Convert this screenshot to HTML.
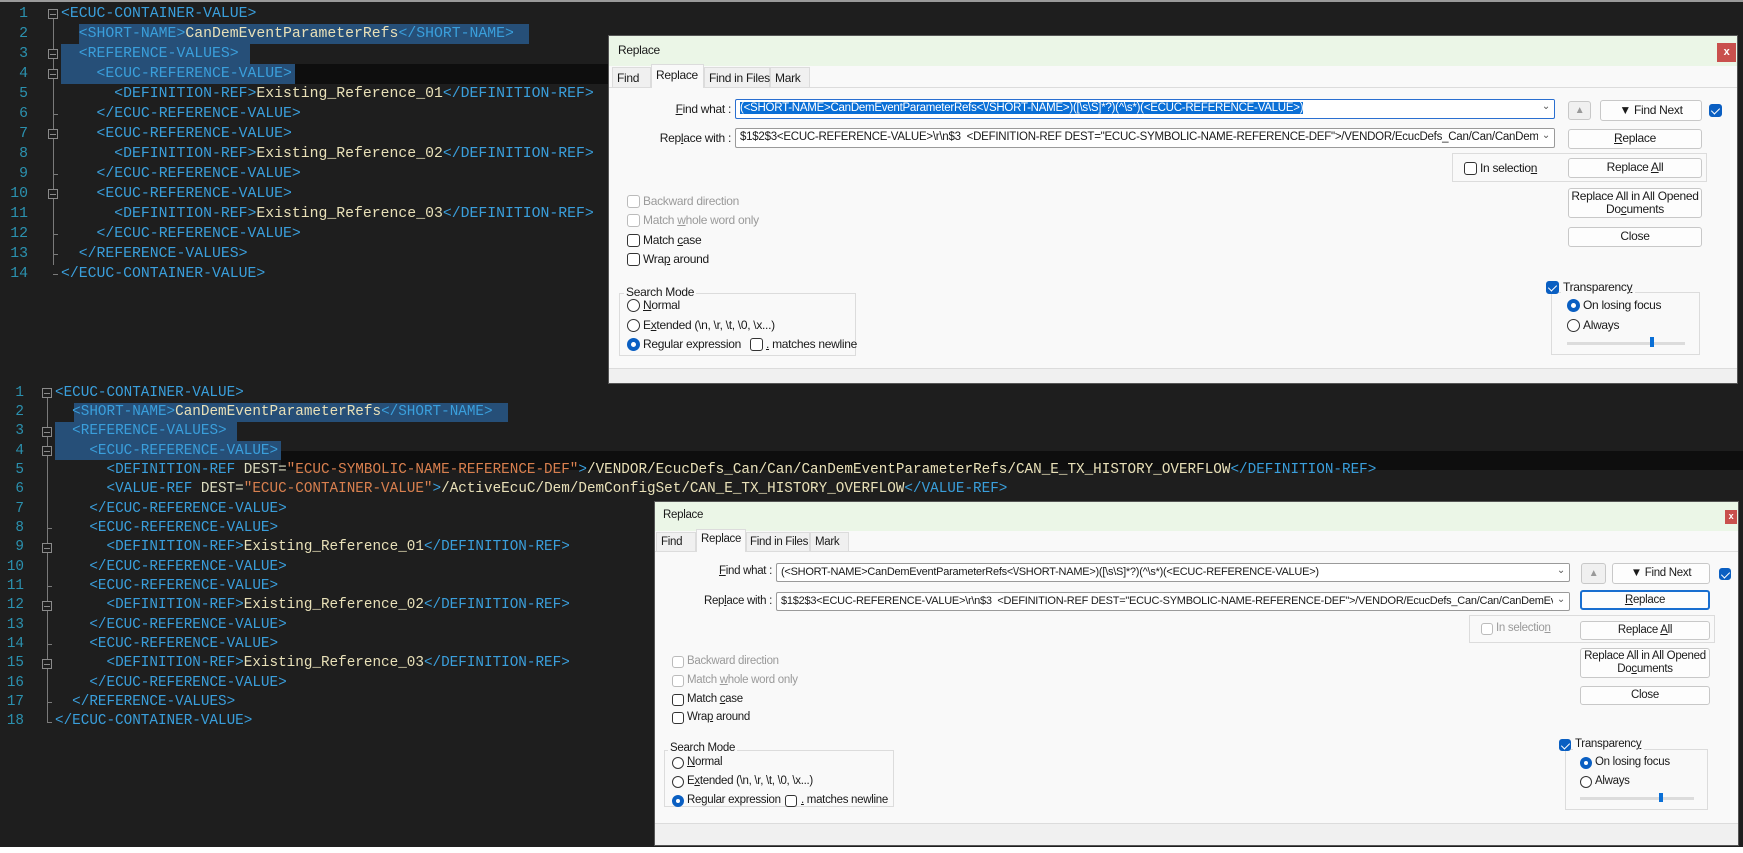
<!DOCTYPE html>
<html><head><meta charset="utf-8">
<style>
*{margin:0;padding:0;box-sizing:border-box}
body{width:1743px;height:853px;background:#fff;position:relative;overflow:hidden;font-family:"Liberation Sans",sans-serif}
.ed{position:absolute;left:0;background:#1e1e1e;width:1743px}
.code{position:absolute;font-family:"Liberation Mono",monospace;white-space:pre;color:#dcdcaa}
.ln{position:absolute;font-family:"Liberation Mono",monospace;color:#2b91af;text-align:right}
.t{color:#3a9fdc}.x{color:#e8e0b8}.a{color:#dcdcc0}.v{color:#d9804f}
.hl{position:absolute;background:#264f78}
.cur{position:absolute;background:#0e0e0e}
.fb{position:absolute;width:10px;height:10px;border:1px solid #8a8a8a;background:#1e1e1e}
.fb:after{content:"";position:absolute;left:1px;right:1px;top:3.5px;height:1px;background:#8a8a8a}
.vl{position:absolute;width:1px;background:#7a7a7a}
.tk{position:absolute;height:1px;width:5px;background:#7a7a7a}
.dl{position:absolute;background:#f9f9f9;font-size:12px;color:#1a1a1a;box-shadow:0 0 0 1px #555;letter-spacing:-.3px}
.dl > *{position:absolute;white-space:nowrap}
.tb{left:0;right:0;top:0;background:#ebf6e7}
.tab{border:1px solid #dcdcdc;border-bottom:none;background:#f0f0f0;padding:3px 0 0 4px}
.tab.act{background:#f9f9f9}
.lbl{text-align:right}
.fld{background:#fff;border:1px solid #9a9a9a;border-radius:2px;overflow:hidden;padding:2px 0 0 4px;font-size:11.5px;letter-spacing:-.25px}
.fld .dd{position:absolute;right:0;top:0;padding:1px 4px 0 4px;color:#555;font-size:10px;background:#fff}
.btn{background:#fdfdfd;border:1px solid #c8c8c8;border-radius:3px;text-align:center;line-height:17px}
.cb{width:13px;height:13px;border:1px solid #333;border-radius:3px;background:#fff}
.cb.dis{border-color:#bbb}
.cb.on{background:#0a5fc2;border-color:#0a5fc2}
.cb.on:after{content:"";position:absolute;left:3px;top:1px;width:4px;height:7px;border:solid #fff;border-width:0 1.5px 1.5px 0;transform:rotate(45deg)}
.rd{width:13px;height:13px;border:1px solid #333;border-radius:50%;background:#fff}
.rd.on{border:4px solid #0a5fc2}
.gray{color:#9a9a9a}
.grp{border:1px solid #dcdcdc}
.st{left:0;right:0;bottom:0;background:#f0f0f0;border-top:1px solid #dcdcdc}
</style></head><body>

<div class="ed" style="top:0;height:847px"></div>
<div style="position:absolute;left:0;top:0;width:1743px;height:2px;background:#9a9a9a"></div>

<!-- TOP EDITOR -->
<div class="cur" style="left:295px;top:64px;width:320px;height:20px"></div>
<div class="hl" style="left:79px;top:24px;width:450px;height:20px"></div>
<div class="hl" style="left:61px;top:44px;width:189px;height:20px"></div>
<div class="hl" style="left:61px;top:64px;width:234px;height:20px"></div>
<div class="ln" style="left:0;top:4px;width:28px;font-size:14.8px;line-height:20px">1<br>2<br>3<br>4<br>5<br>6<br>7<br>8<br>9<br>10<br>11<br>12<br>13<br>14</div>
<div class="vl" style="left:53px;top:19px;height:246px"></div>
<div class="fb" style="left:48px;top:9px"></div>
<div class="fb" style="left:48px;top:49px"></div>
<div class="fb" style="left:48px;top:69px"></div>
<div class="fb" style="left:48px;top:129px"></div>
<div class="fb" style="left:48px;top:189px"></div>
<div class="tk" style="left:53px;top:114px"></div><div class="tk" style="left:53px;top:174px"></div><div class="tk" style="left:53px;top:234px"></div><div class="tk" style="left:53px;top:254px"></div><div class="tk" style="left:53px;top:274px"></div>
<div class="code" style="left:61px;top:4px;font-size:14.8px;line-height:20px"><span class="t">&lt;ECUC-CONTAINER-VALUE&gt;</span>
  <span class="t">&lt;SHORT-NAME&gt;</span><span class="x">CanDemEventParameterRefs</span><span class="t">&lt;/SHORT-NAME&gt;</span>
  <span class="t">&lt;REFERENCE-VALUES&gt;</span>
    <span class="t">&lt;ECUC-REFERENCE-VALUE&gt;</span>
      <span class="t">&lt;DEFINITION-REF&gt;</span><span class="x">Existing_Reference_01</span><span class="t">&lt;/DEFINITION-REF&gt;</span>
    <span class="t">&lt;/ECUC-REFERENCE-VALUE&gt;</span>
    <span class="t">&lt;ECUC-REFERENCE-VALUE&gt;</span>
      <span class="t">&lt;DEFINITION-REF&gt;</span><span class="x">Existing_Reference_02</span><span class="t">&lt;/DEFINITION-REF&gt;</span>
    <span class="t">&lt;/ECUC-REFERENCE-VALUE&gt;</span>
    <span class="t">&lt;ECUC-REFERENCE-VALUE&gt;</span>
      <span class="t">&lt;DEFINITION-REF&gt;</span><span class="x">Existing_Reference_03</span><span class="t">&lt;/DEFINITION-REF&gt;</span>
    <span class="t">&lt;/ECUC-REFERENCE-VALUE&gt;</span>
  <span class="t">&lt;/REFERENCE-VALUES&gt;</span>
<span class="t">&lt;/ECUC-CONTAINER-VALUE&gt;</span></div>

<!-- BOTTOM EDITOR -->
<div class="cur" style="left:281px;top:451px;width:1462px;height:19.4px"></div>
<div class="hl" style="left:74px;top:403px;width:434px;height:19.4px"></div>
<div class="hl" style="left:55px;top:422px;width:182px;height:19.4px"></div>
<div class="hl" style="left:55px;top:441px;width:226px;height:19.4px"></div>
<div class="ln" style="left:0;top:383.5px;width:24px;font-size:14.3px;line-height:19.35px">1<br>2<br>3<br>4<br>5<br>6<br>7<br>8<br>9<br>10<br>11<br>12<br>13<br>14<br>15<br>16<br>17<br>18</div>
<div class="vl" style="left:47px;top:398px;height:324px"></div>
<div class="fb" style="left:42px;top:388px"></div>
<div class="fb" style="left:42px;top:427px"></div>
<div class="fb" style="left:42px;top:446px"></div>
<div class="fb" style="left:42px;top:543px"></div>
<div class="fb" style="left:42px;top:601px"></div>
<div class="fb" style="left:42px;top:659px"></div>
<div class="tk" style="left:47px;top:528px"></div><div class="tk" style="left:47px;top:586px"></div><div class="tk" style="left:47px;top:644px"></div><div class="tk" style="left:47px;top:702px"></div><div class="tk" style="left:47px;top:722px"></div>
<div class="code" style="left:55px;top:383.5px;font-size:14.3px;line-height:19.35px"><span class="t">&lt;ECUC-CONTAINER-VALUE&gt;</span>
  <span class="t">&lt;SHORT-NAME&gt;</span><span class="x">CanDemEventParameterRefs</span><span class="t">&lt;/SHORT-NAME&gt;</span>
  <span class="t">&lt;REFERENCE-VALUES&gt;</span>
    <span class="t">&lt;ECUC-REFERENCE-VALUE&gt;</span>
      <span class="t">&lt;DEFINITION-REF </span><span class="a">DEST=</span><span class="v">"ECUC-SYMBOLIC-NAME-REFERENCE-DEF"</span><span class="t">&gt;</span><span class="x">/VENDOR/EcucDefs_Can/Can/CanDemEventParameterRefs/CAN_E_TX_HISTORY_OVERFLOW</span><span class="t">&lt;/DEFINITION-REF&gt;</span>
      <span class="t">&lt;VALUE-REF </span><span class="a">DEST=</span><span class="v">"ECUC-CONTAINER-VALUE"</span><span class="t">&gt;</span><span class="x">/ActiveEcuC/Dem/DemConfigSet/CAN_E_TX_HISTORY_OVERFLOW</span><span class="t">&lt;/VALUE-REF&gt;</span>
    <span class="t">&lt;/ECUC-REFERENCE-VALUE&gt;</span>
    <span class="t">&lt;ECUC-REFERENCE-VALUE&gt;</span>
      <span class="t">&lt;DEFINITION-REF&gt;</span><span class="x">Existing_Reference_01</span><span class="t">&lt;/DEFINITION-REF&gt;</span>
    <span class="t">&lt;/ECUC-REFERENCE-VALUE&gt;</span>
    <span class="t">&lt;ECUC-REFERENCE-VALUE&gt;</span>
      <span class="t">&lt;DEFINITION-REF&gt;</span><span class="x">Existing_Reference_02</span><span class="t">&lt;/DEFINITION-REF&gt;</span>
    <span class="t">&lt;/ECUC-REFERENCE-VALUE&gt;</span>
    <span class="t">&lt;ECUC-REFERENCE-VALUE&gt;</span>
      <span class="t">&lt;DEFINITION-REF&gt;</span><span class="x">Existing_Reference_03</span><span class="t">&lt;/DEFINITION-REF&gt;</span>
    <span class="t">&lt;/ECUC-REFERENCE-VALUE&gt;</span>
  <span class="t">&lt;/REFERENCE-VALUES&gt;</span>
<span class="t">&lt;/ECUC-CONTAINER-VALUE&gt;</span></div>

<!-- TOP DIALOG -->
<div class="dl" style="left:609px;top:36px;width:1128px;height:347px">
 <div class="tb" style="height:30px"></div>
 <div style="left:9px;top:7px">Replace</div>
 <div style="left:1108px;top:7px;width:19px;height:19px;background:#c9504d;color:#fff;font-size:11px;text-align:center;line-height:18px;font-weight:bold">x</div>
 <div style="left:0;right:0;top:51px;height:1px;background:#dcdcdc"></div>
 <div class="tab" style="left:3px;top:31px;width:39px;height:20px">Find</div>
 <div class="tab act" style="left:42px;top:28px;width:53px;height:24px;padding-top:3px">Replace</div>
 <div class="tab" style="left:95px;top:31px;width:66px;height:20px">Find in Files</div>
 <div class="tab" style="left:161px;top:31px;width:40px;height:20px">Mark</div>
 <div class="lbl" style="right:1006px;top:66px"><u>F</u>ind what :</div>
 <div class="fld" style="left:126px;top:63px;width:820px;height:20px;border-color:#2a6fd0"><span style="background:#0a6fd6;color:#fff">(&lt;SHORT-NAME&gt;CanDemEventParameterRefs&lt;\/SHORT-NAME&gt;)([\s\S]*?)(^\s*)(&lt;ECUC-REFERENCE-VALUE&gt;)</span><span class="dd">&#8964;</span></div>
 <div class="lbl" style="right:1006px;top:95px">Rep<u>l</u>ace with :</div>
 <div class="fld" style="left:126px;top:92px;width:820px;height:20px">$1$2$3&lt;ECUC-REFERENCE-VALUE&gt;\r\n$3&nbsp; &lt;DEFINITION-REF DEST="ECUC-SYMBOLIC-NAME-REFERENCE-DEF"&gt;/VENDOR/EcucDefs_Can/Can/CanDemEventParam<span class="dd">&#8964;</span></div>
 <div class="btn" style="left:959px;top:65px;width:23px;height:19px;background:#f0f0f0;color:#999;font-size:10px">&#9650;</div>
 <div class="btn" style="left:991px;top:64px;width:102px;height:21px;line-height:19px">&#9660; Find Next</div>
 <div class="cb on" style="left:1100px;top:68px"></div>
 <div class="btn" style="left:959px;top:93px;width:134px;height:20px"><u>R</u>eplace</div>
 <div class="grp" style="left:843px;top:117px;width:255px;height:29px"></div>
 <div class="cb" style="left:855px;top:126px"></div>
 <div style="left:871px;top:125px">In selectio<u>n</u></div>
 <div class="btn" style="left:959px;top:122px;width:134px;height:20px">Replace <u>A</u>ll</div>
 <div class="btn" style="left:959px;top:152px;width:134px;height:30px;line-height:13px;padding-top:1px">Replace All in All Opened<br>Do<u>c</u>uments</div>
 <div class="btn" style="left:959px;top:191px;width:134px;height:20px">Close</div>
 <div class="cb dis" style="left:18px;top:159px"></div><div class="gray" style="left:34px;top:158px">Backward direction</div>
 <div class="cb dis" style="left:18px;top:178px"></div><div class="gray" style="left:34px;top:177px">Match <u>w</u>hole word only</div>
 <div class="cb" style="left:18px;top:198px"></div><div style="left:34px;top:197px">Match <u>c</u>ase</div>
 <div class="cb" style="left:18px;top:217px"></div><div style="left:34px;top:216px">Wra<u>p</u> around</div>
 <div class="grp" style="left:10px;top:257px;width:237px;height:63px"></div>
 <div style="left:15px;top:249px;background:#f9f9f9;padding:0 2px">Search Mode</div>
 <div class="rd" style="left:18px;top:263px"></div><div style="left:34px;top:262px"><u>N</u>ormal</div>
 <div class="rd" style="left:18px;top:283px"></div><div style="left:34px;top:282px">E<u>x</u>tended (\n, \r, \t, \0, \x...)</div>
 <div class="rd on" style="left:18px;top:302px"></div><div style="left:34px;top:301px">Re<u>g</u>ular expression</div>
 <div class="cb" style="left:141px;top:302px"></div><div style="left:157px;top:301px"><u>.</u> matches newline</div>
 <div class="grp" style="left:942px;top:256px;width:149px;height:63px"></div>
 <div class="cb on" style="left:937px;top:245px"></div>
 <div style="left:952px;top:244px;background:#f9f9f9;padding:0 3px 0 2px">Transparenc<u>y</u></div>
 <div class="rd on" style="left:958px;top:263px"></div><div style="left:974px;top:262px">On losing focus</div>
 <div class="rd" style="left:958px;top:283px"></div><div style="left:974px;top:282px">Always</div>
 <div style="left:958px;top:306px;width:118px;height:3px;background:#dcdcdc"></div>
 <div style="left:1041px;top:301px;width:4px;height:10px;background:#0a6fd6"></div>
 <div class="st" style="height:15px"></div>
</div>

<!-- BOTTOM DIALOG -->
<div class="dl" style="left:655px;top:502px;width:1083px;height:343px;font-size:11.5px">
 <div class="tb" style="height:29px"></div>
 <div style="left:8px;top:7px">Replace</div>
 <div style="left:1070px;top:8px;width:12px;height:14px;background:#c9504d;color:#fff;font-size:9px;text-align:center;line-height:13px;font-weight:bold">x</div>
 <div style="left:0;right:0;top:49px;height:1px;background:#dcdcdc"></div>
 <div class="tab" style="left:1px;top:30px;width:40px;height:19px">Find</div>
 <div class="tab act" style="left:41px;top:27px;width:50px;height:23px">Replace</div>
 <div class="tab" style="left:91px;top:30px;width:64px;height:19px;padding-left:3px">Find in Files</div>
 <div class="tab" style="left:155px;top:30px;width:39px;height:19px">Mark</div>
 <div class="lbl" style="right:966px;top:63px"><u>F</u>ind what :</div>
 <div class="fld" style="left:121px;top:61px;width:794px;height:19px;font-size:11px">(&lt;SHORT-NAME&gt;CanDemEventParameterRefs&lt;\/SHORT-NAME&gt;)([\s\S]*?)(^\s*)(&lt;ECUC-REFERENCE-VALUE&gt;)<span class="dd">&#8964;</span></div>
 <div class="lbl" style="right:966px;top:93px">Rep<u>l</u>ace with :</div>
 <div class="fld" style="left:121px;top:90px;width:794px;height:19px;font-size:11px">$1$2$3&lt;ECUC-REFERENCE-VALUE&gt;\r\n$3&nbsp; &lt;DEFINITION-REF DEST="ECUC-SYMBOLIC-NAME-REFERENCE-DEF"&gt;/VENDOR/EcucDefs_Can/Can/CanDemEventParam<span class="dd">&#8964;</span></div>
 <div class="btn" style="left:926px;top:61px;width:25px;height:21px;background:#f0f0f0;color:#999;font-size:10px;line-height:19px">&#9650;</div>
 <div class="btn" style="left:957px;top:61px;width:98px;height:21px;line-height:19px">&#9660; Find Next</div>
 <div class="cb on" style="left:1064px;top:66px;width:12px;height:12px"></div>
 <div class="btn" style="left:925px;top:88px;width:130px;height:20px;border:2px solid #1a6fd0;line-height:16px"><u>R</u>eplace</div>
 <div class="grp" style="left:814px;top:113px;width:246px;height:28px"></div>
 <div class="cb dis" style="left:826px;top:121px;width:12px;height:12px"></div>
 <div class="gray" style="left:841px;top:120px">In selectio<u>n</u></div>
 <div class="btn" style="left:925px;top:119px;width:130px;height:19px">Replace <u>A</u>ll</div>
 <div class="btn" style="left:925px;top:146px;width:130px;height:30px;line-height:13px;padding-top:1px">Replace All in All Opened<br>Do<u>c</u>uments</div>
 <div class="btn" style="left:925px;top:184px;width:130px;height:19px">Close</div>
 <div class="cb dis" style="left:17px;top:154px;width:12px;height:12px"></div><div class="gray" style="left:32px;top:153px">Backward direction</div>
 <div class="cb dis" style="left:17px;top:173px;width:12px;height:12px"></div><div class="gray" style="left:32px;top:172px">Match <u>w</u>hole word only</div>
 <div class="cb" style="left:17px;top:192px;width:12px;height:12px"></div><div style="left:32px;top:191px">Match <u>c</u>ase</div>
 <div class="cb" style="left:17px;top:210px;width:12px;height:12px"></div><div style="left:32px;top:209px">Wra<u>p</u> around</div>
 <div class="grp" style="left:9px;top:248px;width:230px;height:57px"></div>
 <div style="left:13px;top:240px;background:#f9f9f9;padding:0 2px">Search Mode</div>
 <div class="rd" style="left:17px;top:255px;width:12px;height:12px"></div><div style="left:32px;top:254px"><u>N</u>ormal</div>
 <div class="rd" style="left:17px;top:274px;width:12px;height:12px"></div><div style="left:32px;top:273px">E<u>x</u>tended (\n, \r, \t, \0, \x...)</div>
 <div class="rd on" style="left:17px;top:293px;width:12px;height:12px"></div><div style="left:32px;top:292px">Re<u>g</u>ular expression</div>
 <div class="cb" style="left:130px;top:293px;width:12px;height:12px"></div><div style="left:146px;top:292px"><u>.</u> matches newline</div>
 <div class="grp" style="left:910px;top:247px;width:143px;height:61px"></div>
 <div class="cb on" style="left:904px;top:237px;width:12px;height:12px"></div>
 <div style="left:918px;top:236px;background:#f9f9f9;padding:0 3px 0 2px">Transparenc<u>y</u></div>
 <div class="rd on" style="left:925px;top:255px;width:12px;height:12px"></div><div style="left:940px;top:254px">On losing focus</div>
 <div class="rd" style="left:925px;top:274px;width:12px;height:12px"></div><div style="left:940px;top:273px">Always</div>
 <div style="left:925px;top:295px;width:114px;height:3px;background:#dcdcdc"></div>
 <div style="left:1004px;top:291px;width:4px;height:9px;background:#0a6fd6"></div>
 <div class="st" style="height:22px"></div>
</div>
</body></html>
